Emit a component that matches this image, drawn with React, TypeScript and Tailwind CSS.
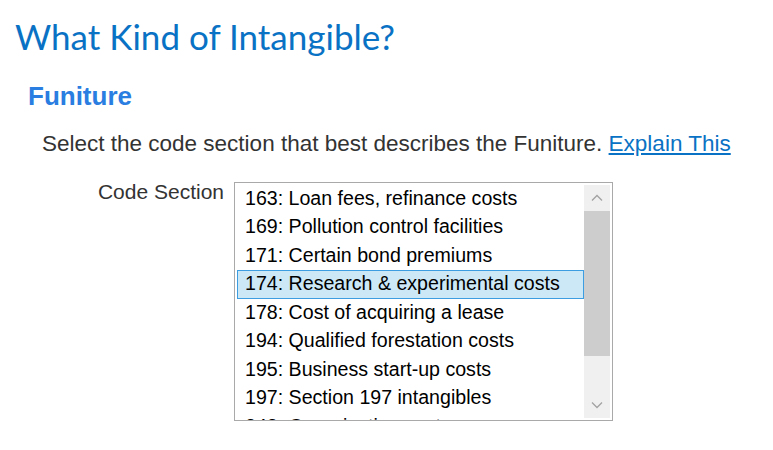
import React from "react";

const codes = [
  "163: Loan fees, refinance costs",
  "169: Pollution control facilities",
  "171: Certain bond premiums",
  "174: Research & experimental costs",
  "178: Cost of acquiring a lease",
  "194: Qualified forestation costs",
  "195: Business start-up costs",
  "197: Section 197 intangibles",
  "248: Organization costs",
];

const selected = 3;

const ScrollBar = () => (
  <div className="flex flex-col w-[26px] shrink-0 bg-[#f0f0f0] my-[2px] mr-[2px]">
    <div className="h-[26px] flex items-center justify-center">
      <svg width="12" height="8" viewBox="0 0 12 8" fill="none">
        <path d="M1 6.5 L6 1.5 L11 6.5" stroke="#a3a3a3" strokeWidth="1.3" />
      </svg>
    </div>
    <div className="h-[145px] bg-[#cdcdcd]" />
    <div className="flex-1" />
    <div className="h-[26px] flex items-center justify-center">
      <svg width="12" height="8" viewBox="0 0 12 8" fill="none">
        <path d="M1 1.5 L6 6.5 L11 1.5" stroke="#a3a3a3" strokeWidth="1.3" />
      </svg>
    </div>
  </div>
);

export default function App() {
  return (
    <div className="w-[773px] h-[450px] bg-white overflow-hidden font-['Liberation_Sans',Arial,sans-serif]">
      <h1 className="pl-[15px] pt-[16px] text-[35px] leading-[40px] text-[#0a72c4] font-['Lato',sans-serif]">
        What Kind of Intangible?
      </h1>
      <h2 className="pl-[28px] mt-[25px] text-[26px] leading-[30px] font-bold text-[#2a7de1]">
        Funiture
      </h2>
      <p className="pl-[42px] mt-[20px] text-[22.5px] leading-[26px] text-[#333333]">
        Select the code section that best describes the Funiture.{" "}
        <a href="#" className="text-[#0a72c4] underline">
          Explain This
        </a>
      </p>
      <div className="flex mt-[25px]">
        <label className="w-[224px] text-right text-[21px] leading-[20px] text-[#333333]">
          Code Section
        </label>
        <div className="ml-[10px] w-[379px] h-[239px] border border-[#a9a9a9] flex overflow-hidden">
          <div className="flex-1 pt-[1.5px] pl-[2px] overflow-hidden">
            {codes.map((c, i) => (
              <div
                key={c}
                className={
                  "h-[28.5px] pl-[7px] text-[19.6px] leading-[24px] text-black whitespace-nowrap border " +
                  (i === selected ? "bg-[#cce8f7] border-[#3c9ee0]" : "border-transparent")
                }
              >
                {c}
              </div>
            ))}
          </div>
          <ScrollBar />
        </div>
      </div>
    </div>
  );
}
